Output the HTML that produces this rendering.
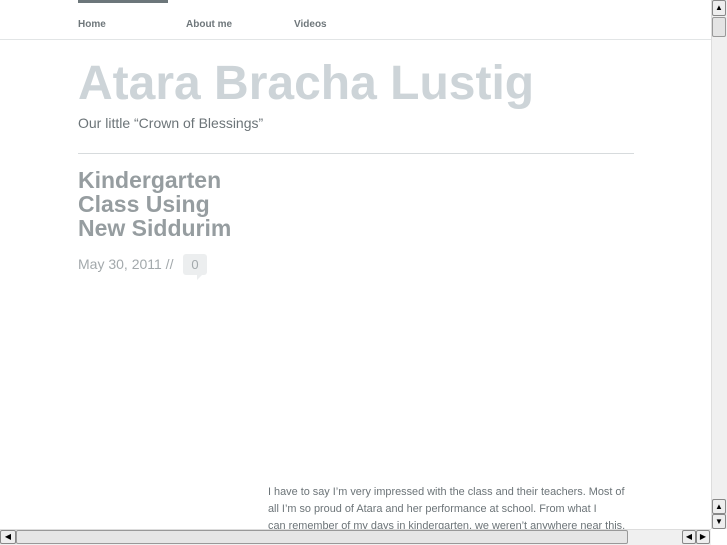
<!DOCTYPE html>
<html><head><style>
*{margin:0;padding:0;box-sizing:border-box}
body{width:727px;height:545px;overflow:hidden;background:#fff;font-family:"Liberation Sans",sans-serif;position:relative}
.a{position:absolute;white-space:nowrap}
</style></head><body>
<div class="a" style="left:78px;top:0;width:90px;height:3px;background:#6c767a"></div>
<div class="a" style="left:78px;top:19px;font-size:10px;font-weight:bold;color:#6f777b">Home</div>
<div class="a" style="left:186px;top:19px;font-size:10px;font-weight:bold;color:#6f777b">About me</div>
<div class="a" style="left:294px;top:19px;font-size:10px;font-weight:bold;color:#6f777b">Videos</div>
<div class="a" style="left:0;top:39px;width:711px;height:1px;background:#e2e5e6"></div>
<div class="a" style="left:78px;top:54px;font-size:48px;font-weight:bold;color:#cdd4d8;letter-spacing:0px;line-height:60px">Atara Bracha Lustig</div>
<div class="a" style="left:78px;top:115px;font-size:14px;color:#6c7478">Our little “Crown of Blessings”</div>
<div class="a" style="left:78px;top:153px;width:556px;height:1px;background:#d7dbdd"></div>
<div class="a" style="left:78px;top:168px;font-size:23px;font-weight:bold;color:#969da0;line-height:24px">Kindergarten<br>Class Using<br>New Siddurim</div>
<div class="a" style="left:78px;top:256px;font-size:14px;color:#a3a9ac">May 30, 2011 //</div>
<div class="a" style="left:183px;top:254px;width:24px;height:21px;background:#eceeef;border-radius:3px;font-size:13px;color:#a3a9ac;text-align:center;line-height:21px">0</div>
<div class="a" style="left:197px;top:275px;width:0;height:0;border-left:5px solid #eceeef;border-bottom:5px solid transparent"></div>
<div class="a" style="left:268px;top:484px;font-size:10.9px;color:#6c7478;line-height:17px">I have to say I’m very impressed with the class and their teachers. Most of<br>all I’m so proud of Atara and her performance at school. From what I<br>can remember of my days in kindergarten, we weren’t anywhere near this.</div>
<div class="a" style="left:711px;top:0;width:16px;height:529px;background:#f0f0f0;border-left:1px solid #ddd"></div>
<div class="a" style="left:712px;top:0;width:14px;height:16px;background:#eee;border:1px solid #888;border-radius:2px;font-size:8px;text-align:center;line-height:14px">▲</div>
<div class="a" style="left:712px;top:17px;width:14px;height:20px;background:#e4e4e4;border:1px solid #999;border-radius:2px"></div>
<div class="a" style="left:712px;top:499px;width:14px;height:15px;background:#eee;border:1px solid #888;border-radius:2px;font-size:8px;text-align:center;line-height:13px">▲</div>
<div class="a" style="left:712px;top:514px;width:14px;height:15px;background:#eee;border:1px solid #888;border-radius:2px;font-size:8px;text-align:center;line-height:13px">▼</div>
<div class="a" style="left:0;top:529px;width:711px;height:16px;background:#f0f0f0;border-top:1px solid #ddd"></div>
<div class="a" style="left:0;top:530px;width:16px;height:14px;background:#eee;border:1px solid #888;border-radius:2px;font-size:8px;text-align:center;line-height:12px">◀</div>
<div class="a" style="left:16px;top:530px;width:612px;height:14px;background:#e6e6e6;border:1px solid #999;border-radius:2px"></div>
<div class="a" style="left:682px;top:530px;width:14px;height:14px;background:#eee;border:1px solid #888;border-radius:2px;font-size:8px;text-align:center;line-height:12px">◀</div>
<div class="a" style="left:696px;top:530px;width:14px;height:14px;background:#eee;border:1px solid #888;border-radius:2px;font-size:8px;text-align:center;line-height:12px">▶</div>
</body></html>
